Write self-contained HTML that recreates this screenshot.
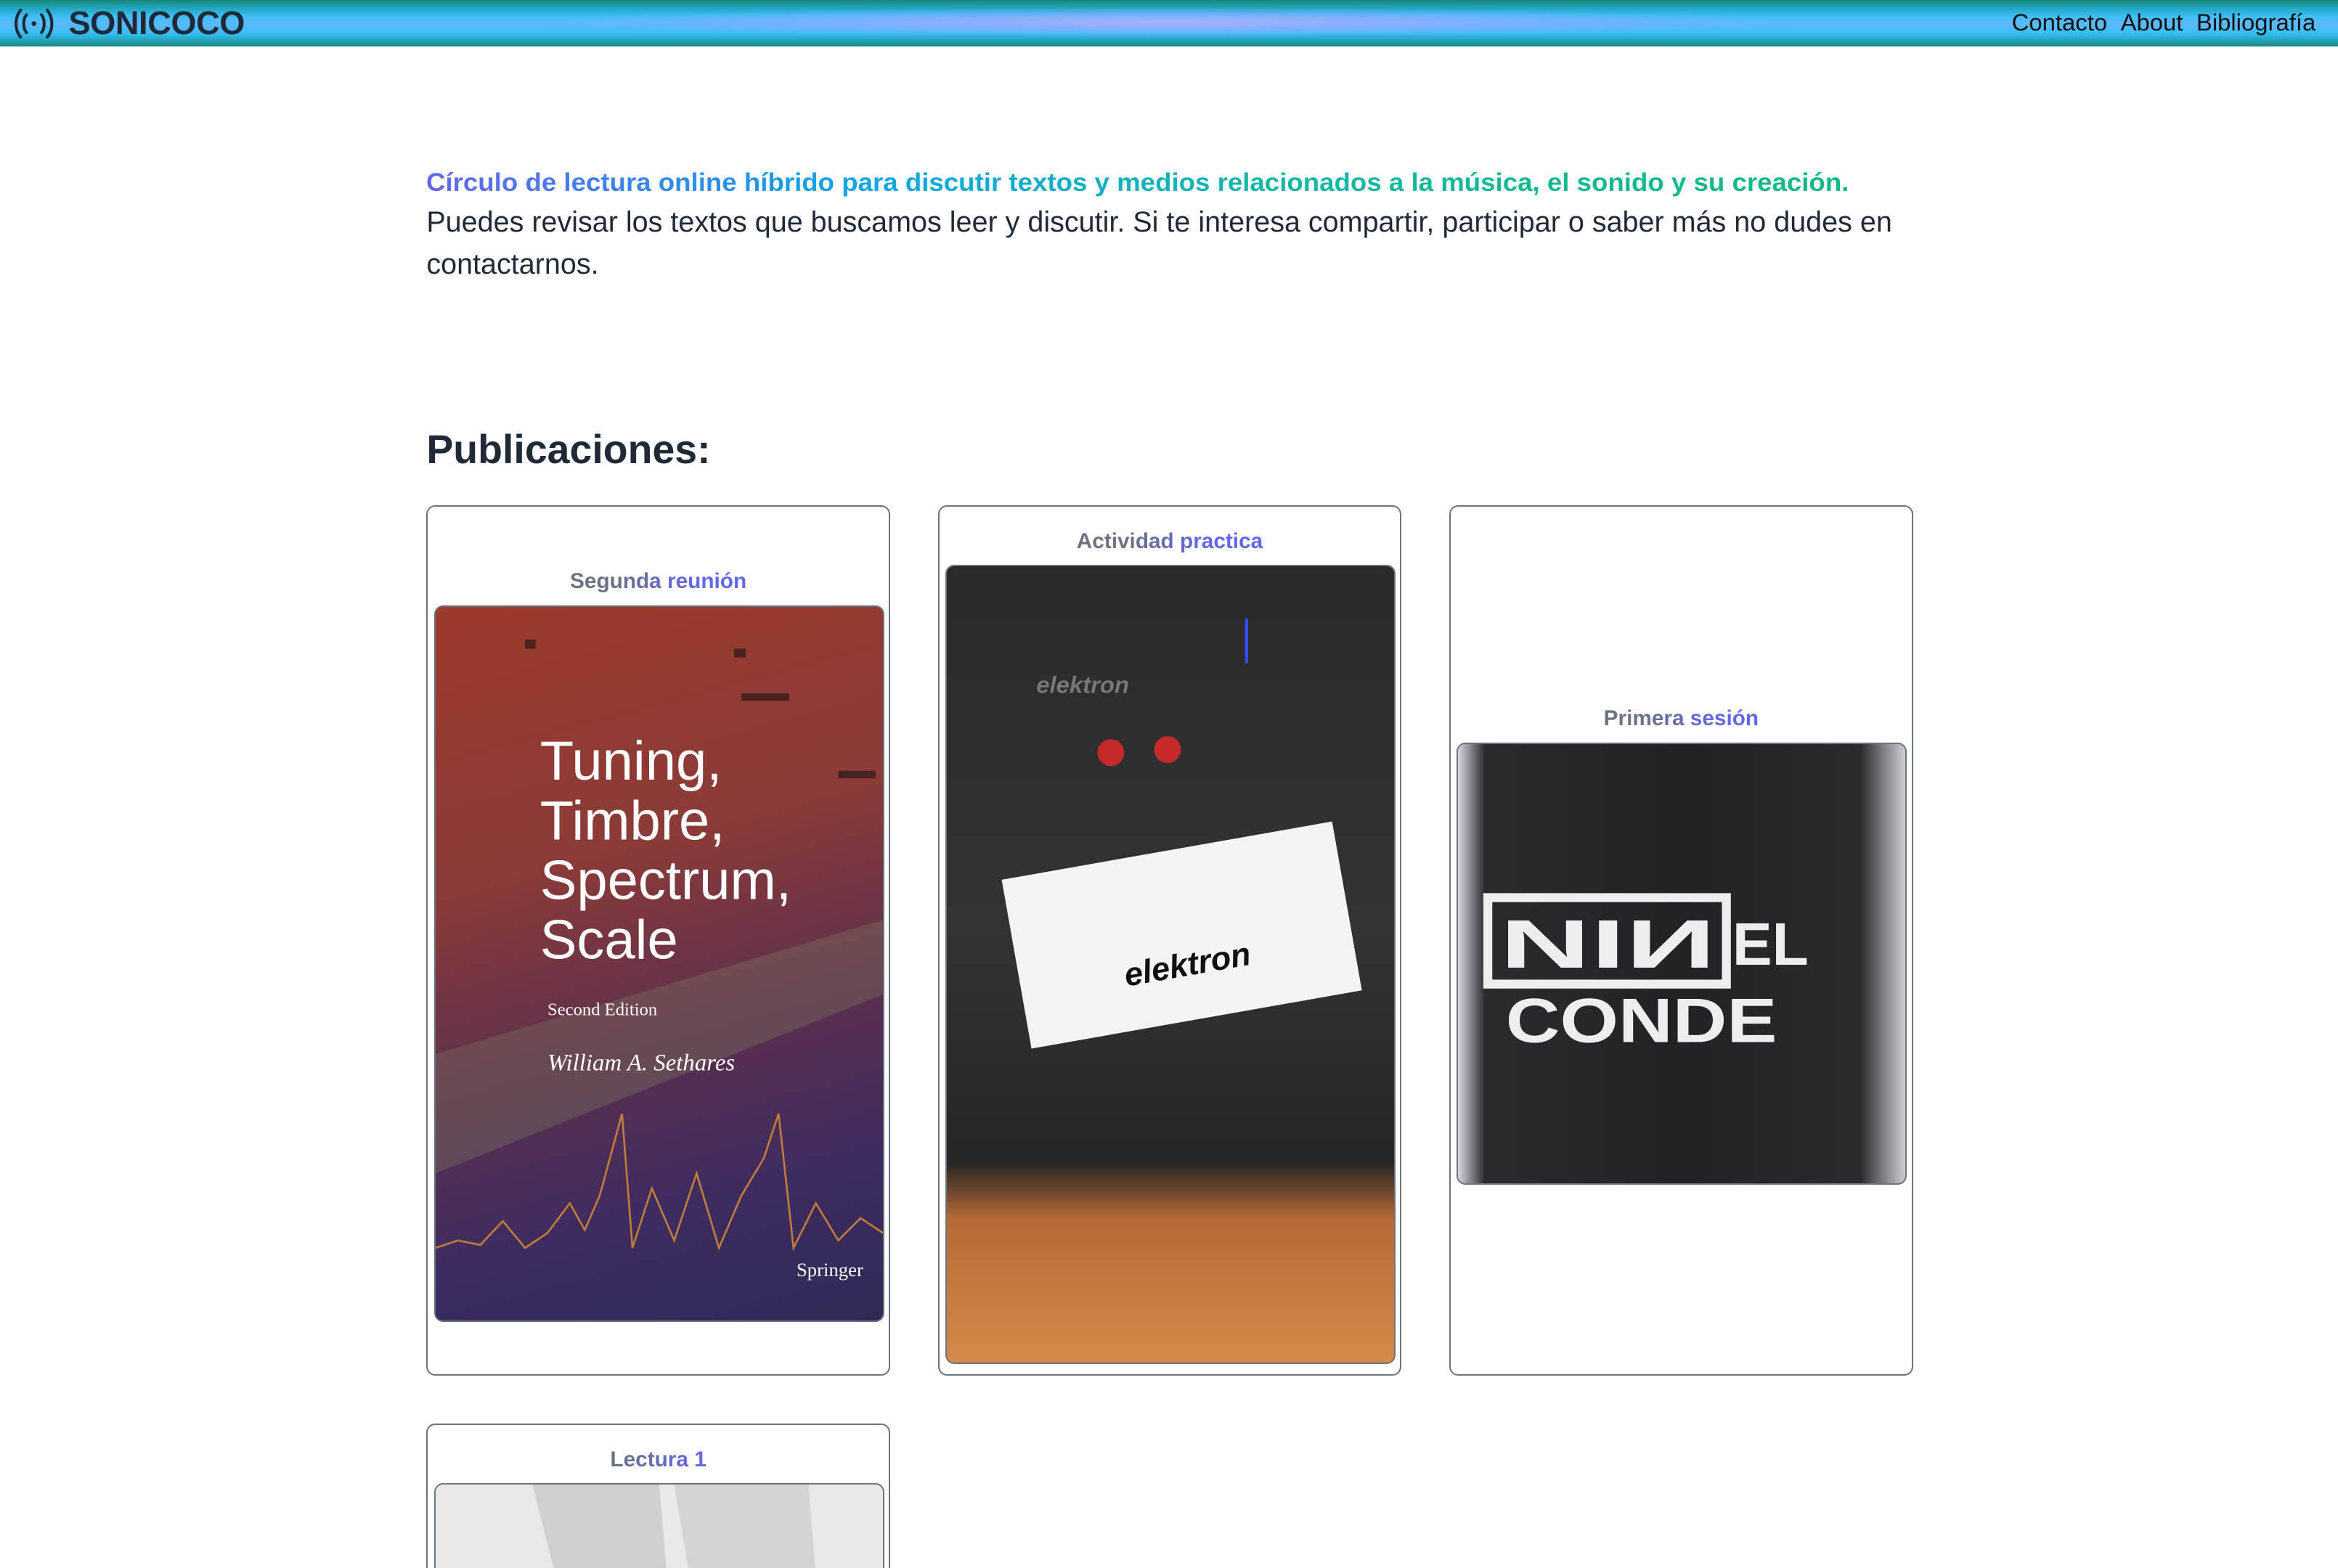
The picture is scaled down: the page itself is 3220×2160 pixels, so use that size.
<!DOCTYPE html>
<html><head><meta charset="utf-8">
<style>
html,body{margin:0;padding:0;background:#fff;overflow:hidden;width:3220px;height:2160px}
#w{zoom:2.0536;width:1568px;height:1052px;position:relative;overflow:hidden;font-family:"Liberation Sans",sans-serif;color:#1f2937}
.hdr{position:absolute;left:0;top:0;width:1568px;height:31px;
background:radial-gradient(ellipse 420px 10px at 784px 15px,rgba(170,175,255,.95),rgba(150,170,255,.6) 50%,rgba(56,189,248,0) 100%),
linear-gradient(180deg,#17877a 0%,#22a7c0 18%,#3bbff8 35%,#5fb8f8 50%,#3bbff8 70%,#22a7c0 85%,#17877a 100%)}
.logo{position:absolute;left:9px;top:3px;display:flex;align-items:center}
.logo b{font-size:22px;font-weight:bold;color:#1f2937;margin-left:9px;letter-spacing:-.2px}
.nav{position:absolute;right:15px;top:6px;font-size:16px;color:#111}
.nav span{margin-left:9px}
.hero{position:absolute;left:286px;top:113px;width:1100px}
.g{display:inline-block;white-space:nowrap;font-weight:bold;font-size:17px;transform:scaleX(1.05);transform-origin:left;
background:linear-gradient(90deg,#6366f1,#0ea5e9 30%,#14b8a6 60%,#10b981);-webkit-background-clip:text;background-clip:text;color:transparent}
.p{font-size:19.25px;line-height:28px;color:#1f2937;margin-top:3px;white-space:nowrap}
h2{position:absolute;left:286px;top:286px;margin:0;font-size:27px;font-weight:bold;color:#1f2937}
.card{position:absolute;width:309px;border:1px solid #6b7280;border-radius:6px;background:#fff;overflow:hidden}
.t{position:absolute;left:0;width:100%;text-align:center;font-weight:bold;font-size:14.5px;
background:linear-gradient(90deg,#6b7280 40%,#6366f1 60%);-webkit-background-clip:text;background-clip:text;color:transparent}
.im{position:absolute;left:4px;width:300px;border:1px solid #6b7280;border-radius:6px;overflow:hidden}
</style></head><body><div id="w">
<div class="hdr">
 <div class="logo"><svg width="28" height="22" viewBox="0 0 28 22" fill="none" stroke="#1f2937" stroke-width="2" stroke-linecap="round"><path d="M5 2C1 7 1 15 5 20"/><path d="M9 5C6.5 8 6.5 14 9 17"/><path d="M23 2C27 7 27 15 23 20"/><path d="M19 5C21.5 8 21.5 14 19 17"/><circle cx="14" cy="11" r="1.6" fill="#1f2937" stroke="none"/></svg><b>SONICOCO</b></div>
 <div class="nav"><span>Contacto</span><span>About</span><span>Bibliografía</span></div>
</div>
<div class="hero">
 <div class="g">Círculo de lectura online híbrido para discutir textos y medios relacionados a la música, el sonido y su creación.</div>
 <div class="p">Puedes revisar los textos que buscamos leer y discutir. Si te interesa compartir, participar o saber más no dudes en<br>contactarnos.</div>
</div>
<h2>Publicaciones:</h2>

<div class="card" style="left:286px;top:339px;height:582px">
 <div class="t" style="top:42px">Segunda reunión</div>
 <div class="im" style="top:66px;height:479px;background:linear-gradient(165deg,#9c3a2c 0%,#8a3b38 35%,#5a2f4e 60%,#3d2c60 80%,#2e2a55 100%)">
  <svg width="300" height="479" style="position:absolute;left:0;top:0">
   <polygon points="0,300 300,210 300,260 0,380" fill="#7d7a62" opacity=".35"/>
   <g fill="#fff" font-family="Liberation Sans,sans-serif" font-size="37">
    <text x="70" y="116">Tuning,</text><text x="70" y="156">Timbre,</text><text x="70" y="196">Spectrum,</text><text x="70" y="236">Scale</text></g>
   <text x="75" y="274" fill="#fff" font-family="Liberation Serif,serif" font-size="12">Second Edition</text>
   <text x="75" y="311" fill="#fff" font-family="Liberation Serif,serif" font-size="16" font-style="italic">William A. Sethares</text>
   <polyline points="0,430 15,425 30,428 45,412 60,430 75,420 90,400 100,418 110,395 125,340 132,430 145,390 160,425 175,380 190,430 205,395 220,370 230,340 240,430 255,400 270,425 285,410 300,420" fill="none" stroke="#c07a3a" stroke-width="1.3"/>
   <text x="242" y="449" fill="#fff" font-family="Liberation Serif,serif" font-size="13">Springer</text>
   <g fill="#2a1a1a" opacity=".7"><rect x="205" y="58" width="32" height="5"/><rect x="200" y="28" width="8" height="6"/><rect x="270" y="110" width="25" height="5"/><rect x="60" y="22" width="7" height="6"/></g>
  </svg>
 </div>
</div>

<div class="card" style="left:629px;top:339px;height:582px">
 <div class="t" style="top:15px">Actividad practica</div>
 <div class="im" style="top:39px;height:534px;background:linear-gradient(180deg,#2a2a2a 0%,#333 45%,#262626 75%,#b66a35 82%,#d58a4a 100%)">
  <svg width="300" height="534" style="position:absolute;left:0;top:0">
   <rect x="45" y="190" width="225" height="115" fill="#f4f4f2" transform="rotate(-10 157 247)"/>
   <text x="115" y="275" font-family="Liberation Sans,sans-serif" font-size="22" font-weight="bold" font-style="italic" fill="#111" transform="rotate(-10 157 247)">elektron</text>
   <circle cx="110" cy="125" r="9" fill="#c42a2a"/><circle cx="148" cy="123" r="9" fill="#c42a2a"/>
   <text x="60" y="85" font-family="Liberation Sans,sans-serif" font-size="16" font-weight="bold" font-style="italic" fill="#777">elektron</text>
   <rect x="200" y="35" width="2" height="30" fill="#3050ff"/>
  </svg>
 </div>
</div>

<div class="card" style="left:972px;top:339px;height:582px">
 <div class="t" style="top:134px">Primera sesión</div>
 <div class="im" style="top:158px;height:295px;background:linear-gradient(90deg,#d9d7de 0%,#2b2b2f 6%,#222226 50%,#2b2b2f 90%,#cfcdd3 100%)">
  <svg width="300" height="295" style="position:absolute;left:0;top:0">
   <rect x="20" y="103" width="160" height="58" fill="none" stroke="#eee" stroke-width="6"/>
   <text x="28" y="150" font-family="Liberation Sans,sans-serif" font-size="46" font-weight="bold" fill="#eee" textLength="145" lengthAdjust="spacingAndGlyphs">NIИ</text>
   <text x="184" y="148" font-family="Liberation Sans,sans-serif" font-size="40" font-weight="bold" fill="#eee">EL</text>
   <text x="32" y="200" font-family="Liberation Sans,sans-serif" font-size="42" font-weight="bold" fill="#eee" textLength="182" lengthAdjust="spacingAndGlyphs">CONDE</text>
  </svg>
 </div>
</div>

<div class="card" style="left:286px;top:955px;height:110px">
 <div class="t" style="top:15px">Lectura 1</div>
 <div class="im" style="top:39px;height:100px;background:#ebe9e6">
  <svg width="300" height="100" style="position:absolute;left:0;top:0"><path d="M65 0 L150 0 L155 60 L80 60 Z" fill="#d2d0cc"/><path d="M160 0 L250 0 L255 60 L170 60 Z" fill="#d6d4d0"/></svg>
 </div>
</div>
</div></body></html>
